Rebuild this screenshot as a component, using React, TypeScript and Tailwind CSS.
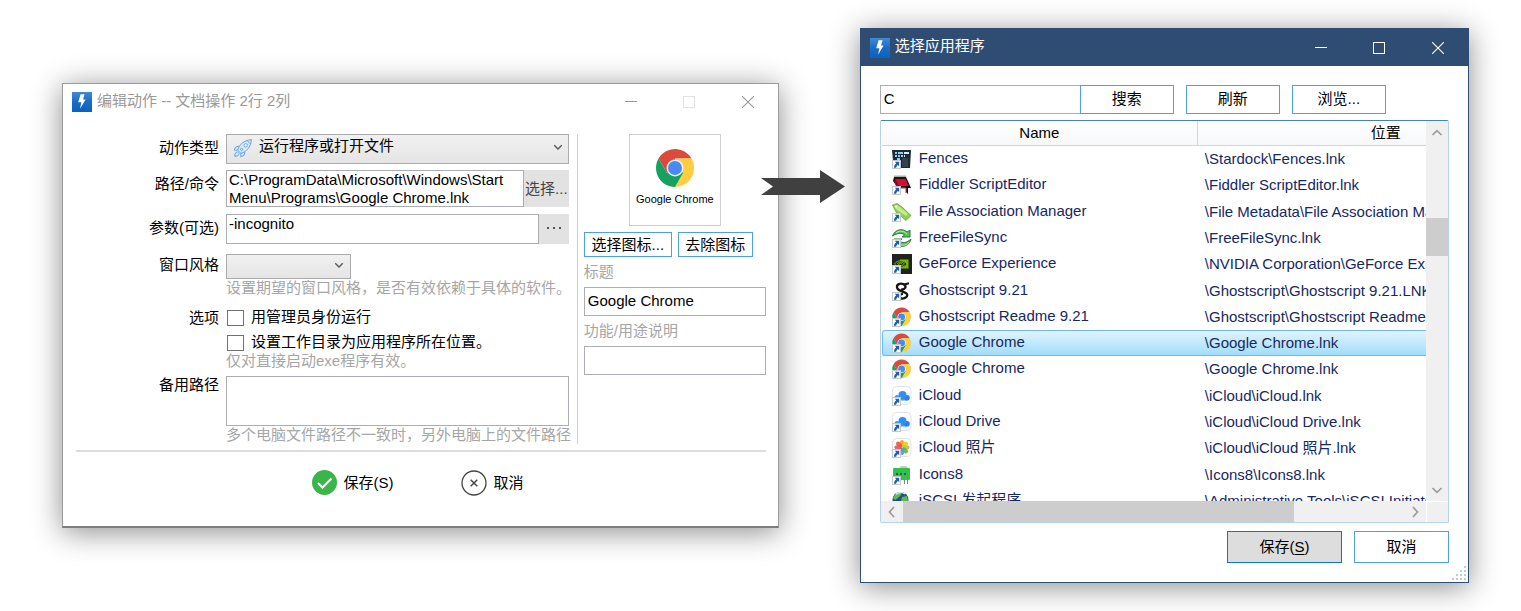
import React from "react";

const FONT = "font-['Liberation_Sans','Noto_Sans_CJK_SC',sans-serif]";

function BoltIcon() {
  return (
    <svg viewBox="0 0 20 20" className="h-5 w-5 shrink-0" aria-hidden="true">
      <defs>
        <linearGradient id="bolt" x1="0" y1="0" x2="0" y2="1">
          <stop offset="0" stopColor="#3f8ad6" />
          <stop offset="0.5" stopColor="#1a6cc4" />
          <stop offset="1" stopColor="#0a62bd" />
        </linearGradient>
      </defs>
      <rect width="20" height="20" fill="url(#bolt)" />
      <path d="M8.600 2.300H12.600L11 7.600H13.600L8 16.800L9.400 10.200H6.200Z" fill="#fff" />
    </svg>
  );
}

function ChromeShapes() {
  return (
    <>
      <path d="M24 24V13H43.05A22 22 0 0 0 4.95 13L14.47 29.5Z" fill="#dc4a3d" />
      <path d="M24 24V13H43.05A22 22 0 0 1 24 46L33.53 29.5Z" fill="#fecd40" />
      <path d="M24 24L33.53 29.5L24 46A22 22 0 0 1 4.95 13L14.47 29.5Z" fill="#16a15f" />
      <circle cx="24" cy="24" r="9.8" fill="#f3f5f8" />
      <circle cx="24" cy="24" r="8.1" fill="#4a89f4" />
    </>
  );
}

function Rocket() {
  return (
    <svg viewBox="0 0 20 20" className="h-5 w-5" fill="#d9eafa" stroke="#5b9bd8" strokeWidth="0.9" strokeLinejoin="round" aria-hidden="true">
      <path d="M6 8L2.500 9.200L1.200 12.200L4.600 12.200M12 14L10.800 17.500L7.800 18.800L7.800 15.400" />
      <path d="M4.600 12C6.500 6.500 10.500 2.400 18.400 1.600C17.800 9.500 13.500 13.500 8 15.400Z" />
      <path d="M14.200 2.600L17.400 5.800" fill="none" />
      <circle cx="12.700" cy="7.300" r="1.700" fill="#fff" />
      <circle cx="8.600" cy="11.400" r="1.100" fill="#fff" />
      <path d="M4.300 13.700L2.200 15.200L1.700 18.300L4.800 17.800L6.300 15.700Z" />
    </svg>
  );
}

function Chevron({ dir, className }: { dir: "up" | "down" | "left" | "right"; className: string }) {
  const paths = {
    up: "M1.500 8L6 3.700L10.500 8",
    down: "M1.500 4L6 8.300L10.500 4",
    left: "M8 1L3.500 6L8 11",
    right: "M4 1L8.500 6L4 11",
  };
  return (
    <svg viewBox="0 0 12 12" className={className} fill="none" stroke="currentColor" strokeWidth="1.7" aria-hidden="true">
      <path d={paths[dir]} />
    </svg>
  );
}

function CaptionButtons({ dimMax }: { dimMax?: boolean }) {
  const btn = "flex h-full w-[58px] items-center justify-center";
  return (
    <div className="ml-auto flex h-full">
      <button aria-label="最小化" className={btn}>
        <svg viewBox="0 0 12 12" className="h-3 w-3"><path d="M0 5.5H12" stroke="currentColor" /></svg>
      </button>
      <button aria-label="最大化" className={btn}>
        <svg viewBox="0 0 12 12" className={dimMax ? "h-3 w-3 text-[#e3e3e3]" : "h-3 w-3"}>
          <rect x="0.5" y="0.5" width="11" height="11" fill="none" stroke="currentColor" />
        </svg>
      </button>
      <button aria-label="关闭" className="flex h-full w-[60px] items-center justify-center">
        <svg viewBox="0 0 12 12" className="h-3 w-3"><path d="M0 0L12 12M12 0L0 12" stroke="currentColor" strokeWidth="1.1" /></svg>
      </button>
    </div>
  );
}

type IconName = "fences" | "fiddler" | "tag" | "sync" | "nvidia" | "ghost" | "chrome" | "cloud" | "photos" | "icons8" | "globe";

const PETALS = ["#f9a31a", "#f4c81e", "#b4cf3a", "#5fb660", "#5b9fd0", "#9a77b8", "#d6607d", "#ee5b3c"];

function Art({ name }: { name: IconName }) {
  switch (name) {
    case "fences":
      return (
        <>
          <path d="M0 1H19L18 19H5V12H1Z" fill="#1c2b33" />
          <path d="M3 3h2v2H3zM6 3h5v2H6zM3 6h2v2H3zM6 6h2v2H6zM9 6h2v2H9zM5 9h3v2H5z" fill="#8fd0f2" />
          <path d="M12 3h5v2h-5zM12 6h1v2h-1z" fill="#d8f0fb" />
          <path d="M10 9h6v9h-6z" fill="#31444e" />
        </>
      );
    case "fiddler":
      return (
        <>
          <path d="M2 2H14L19 13L16 13V19L14 17V13H6V12L1 6Z" fill="#14090b" />
          <path d="M3 4H13.500L17 11H7Z" fill="#d4102f" />
          <path d="M3 4L7 11L5 13L2 7Z" fill="#8f0b20" />
          <path d="M3 0.500v3M5 0.500v3M7 0.500v3M9 0.500v3M11 0.500v3M13 0.500v3" stroke="#333" strokeWidth="0.8" />
          <path d="M9 13h5v5" fill="none" stroke="#b9404f" />
        </>
      );
    case "tag":
      return (
        <>
          <path d="M0.500 3L5 1.500L10 5L19 13.500L14 18.500L4 10Z" fill="#8fcf4a" stroke="#62a82f" strokeWidth="0.8" />
          <path d="M2 4L5 3L9 6L16 12L14 14L4 7Z" fill="#c5ec8f" />
          <circle cx="4" cy="4.500" r="1.100" fill="#fff" />
        </>
      );
    case "sync":
      return (
        <>
          <path d="M0.500 8C3 1 11 0 15 4L18 2V9H10L12.500 7C10 4.500 5 5 0.500 8Z" fill="#5bbb5f" stroke="#267e36" strokeWidth="1" />
          <path d="M19 11C17 18.500 9 20.500 5 16L2 18V11H10L7.500 13C10 15.500 15 15 19 11Z" fill="#5bbb5f" stroke="#267e36" strokeWidth="1" />
          <path d="M4 5C8 2 12 3 15 6M9 17C13 18 16 16 17 14" fill="none" stroke="#baf0b5" />
        </>
      );
    case "nvidia":
      return (
        <>
          <rect width="20" height="20" fill="#20231f" />
          <path d="M8 5.500H16.500V14.500H8Z" fill="#76b900" />
          <path d="M2.500 10C5 6 11 5.500 15 10C11 14.500 6 14 2.500 10Z" fill="#20231f" stroke="#76b900" />
          <path d="M5 10C7 7.500 10.500 7.500 12.500 10C10.500 12.500 7 12 6.500 10C7.500 8.700 9.500 9 10.500 10.500" fill="none" stroke="#76b900" />
        </>
      );
    case "ghost":
      return (
        <path d="M16 2.500L12 3.500C8 1.500 4.500 3.500 5 6.500C5.500 10 11 10 14.500 12.500C17 15 13 18 9.500 17.500C7 17 7 14 10 13M12 3.500C15 5.500 13 8.500 10 8.500" fill="none" stroke="#161616" strokeWidth="2.3" strokeLinecap="round" />
      );
    case "chrome":
      return <g transform="translate(-0.600 -0.300) scale(0.425)"><ChromeShapes /></g>;
    case "cloud":
      return (
        <>
          <rect x="0.5" y="0.5" width="18.500" height="18" rx="4" fill="#fff" stroke="#e2e2e2" />
          <g fill="#3d9df5">
            <circle cx="5" cy="11.500" r="2.500" />
            <rect x="5" y="10" width="10" height="4.500" />
            <circle cx="15" cy="11.700" r="2.800" fill="#2484ec" />
          </g>
          <circle cx="10.500" cy="9" r="4" fill="#2f90f0" />
        </>
      );
    case "photos":
      return (
        <>
          <rect x="0.5" y="0.5" width="18.500" height="18" rx="4" fill="#fff" stroke="#e2e2e2" />
          {PETALS.map((c, i) => (
            <ellipse key={c} cx="10" cy="5.500" rx="2.300" ry="3.600" fill={c} fillOpacity="0.95" transform={`rotate(${i * 45} 10 9.500)`} />
          ))}
        </>
      );
    case "icons8":
      return (
        <>
          <path d="M7 3C8 0 15 0 16 3Z" fill="#c9cdc9" />
          <path d="M2 3H17Q18 3 18 4V14Q18 15 17 15H2Q1 15 1 14V4Q1 3 2 3Z" fill="#35bf4f" />
          <path d="M4 8h2v2H4zM8 8h2v2H8zM12 8h2v2h-2z" fill="#176b2b" />
          <path d="M12.500 15v4M15.500 15v4" stroke="#7c8b80" />
        </>
      );
    case "globe":
      return (
        <>
          <circle cx="8.500" cy="9" r="8" fill="#1f4f8f" />
          <path d="M3 3C6 0 10 1 9 4L6 7L3 9L1 7ZM10 6L15 5L16 10L12 14L9 10Z" fill="#63b84d" />
          <path d="M4 3.500C6 1 11 1 13 3" fill="none" stroke="#c8e9f5" strokeWidth="1.500" />
        </>
      );
  }
}

function AppIcon({ name }: { name: IconName }) {
  return (
    <svg viewBox="0 0 20 20" className="h-5 w-5 shrink-0" aria-hidden="true">
      <Art name={name} />
      <rect x="0.500" y="11.500" width="8" height="8" fill="#fff" stroke="#c4c9cf" strokeWidth="1" />
      <path d="M2.800 12.800H7.200V17.200L5.900 16C4.800 16.700 4.300 17.500 4.200 18.800H2C1.900 16.900 2.700 15.400 4.200 14.300Z" fill="#1f5fa8" />
    </svg>
  );
}

const APPS: { icon: IconName; name: string; path: string; selected?: boolean }[] = [
  { icon: "fences", name: "Fences", path: "\\Stardock\\Fences.lnk" },
  { icon: "fiddler", name: "Fiddler ScriptEditor", path: "\\Fiddler ScriptEditor.lnk" },
  { icon: "tag", name: "File Association Manager", path: "\\File Metadata\\File Association Manager.lnk" },
  { icon: "sync", name: "FreeFileSync", path: "\\FreeFileSync.lnk" },
  { icon: "nvidia", name: "GeForce Experience", path: "\\NVIDIA Corporation\\GeForce Experience.lnk" },
  { icon: "ghost", name: "Ghostscript 9.21", path: "\\Ghostscript\\Ghostscript 9.21.LNK" },
  { icon: "chrome", name: "Ghostscript Readme 9.21", path: "\\Ghostscript\\Ghostscript Readme 9.21.LNK" },
  { icon: "chrome", name: "Google Chrome", path: "\\Google Chrome.lnk", selected: true },
  { icon: "chrome", name: "Google Chrome", path: "\\Google Chrome.lnk" },
  { icon: "cloud", name: "iCloud", path: "\\iCloud\\iCloud.lnk" },
  { icon: "cloud", name: "iCloud Drive", path: "\\iCloud\\iCloud Drive.lnk" },
  { icon: "photos", name: "iCloud 照片", path: "\\iCloud\\iCloud 照片.lnk" },
  { icon: "icons8", name: "Icons8", path: "\\Icons8\\Icons8.lnk" },
  { icon: "globe", name: "iSCSI 发起程序", path: "\\Administrative Tools\\iSCSI Initiator.lnk" },
];

const field = "block border border-[#abadb3] bg-white text-black outline-none";
const blueButton = "border border-[#4f9fe3] bg-white text-black";
const hint = "h-[18px] whitespace-nowrap leading-[18px] text-[#a6a6a6]";
const grid = "grid grid-cols-[156px_minmax(0,1fr)] gap-x-[7px]";
const label = "text-right leading-[18px] text-black";

function EditActionWindow() {
  return (
    <section className="min-w-0 flex-[717] border border-b-2 border-[#9b9b9b] border-b-[#7d7d7d] bg-white shadow-[0_4px_28px_rgba(0,0,0,0.45)]">
      <header className="flex h-9 items-center pl-[9px] text-[#999]">
        <BoltIcon />
        <h1 className="ml-[5px] whitespace-nowrap pb-[2px]">编辑动作 -- 文档操作 2行 2列</h1>
        <CaptionButtons dimMax />
      </header>
      <div className="flex pr-3 pt-[14px]">
        <div className="mr-2 min-w-0 flex-1">
          <div className={grid}>
            <label htmlFor="type" className={`${label} pt-[5px]`}>动作类型</label>
            <div className="relative">
              <select id="type" className="block h-[30px] w-full appearance-none border border-[#acacac] bg-gradient-to-b from-[#f0f0f0] to-[#e5e5e5] pb-[6px] pl-8 text-black">
                <option>运行程序或打开文件</option>
              </select>
              <span className="pointer-events-none absolute left-[7px] top-[4px]"><Rocket /></span>
              <Chevron dir="down" className="pointer-events-none absolute right-[6px] top-[8px] h-[10px] w-[10px] text-[#555]" />
            </div>
          </div>
          <div className={`${grid} mt-[6px]`}>
            <label htmlFor="path" className={`${label} pt-[5px]`}>路径/命令</label>
            <div className="flex h-[37px]">
              <textarea id="path" className={`${field} min-w-0 flex-1 resize-none overflow-hidden px-[2px] leading-[18px]`} defaultValue={"C:\\ProgramData\\Microsoft\\Windows\\Start Menu\\Programs\\Google Chrome.lnk"} />
              <button className="w-[45px] whitespace-nowrap bg-[#e2e2e2] text-[#444]">选择...</button>
            </div>
          </div>
          <div className={`${grid} mt-[7px]`}>
            <label htmlFor="args" className={`${label} pt-[5px]`}>参数(可选)</label>
            <div className="flex h-[30px]">
              <textarea id="args" className={`${field} min-w-0 flex-1 resize-none overflow-hidden px-[2px] leading-[18px]`} defaultValue="-incognito" />
              <button aria-label="更多" className="flex w-[30px] items-center justify-center gap-1 bg-[#e2e2e2] pb-[2px]">
                <i className="h-[2px] w-[2px] bg-[#555]" />
                <i className="h-[2px] w-[2px] bg-[#555]" />
                <i className="h-[2px] w-[2px] bg-[#555]" />
              </button>
            </div>
          </div>
          <div className={`${grid} mt-[10px]`}>
            <label htmlFor="style" className={`${label} pt-[2px]`}>窗口风格</label>
            <div>
              <div className="relative w-[125px]">
                <select id="style" className="block h-[25px] w-full appearance-none border border-[#acacac] bg-gradient-to-b from-[#f0f0f0] to-[#e5e5e5]">
                  <option></option>
                </select>
                <Chevron dir="down" className="pointer-events-none absolute right-[7px] top-[6px] h-[10px] w-[10px] text-[#555]" />
              </div>
              <p className={hint}>设置期望的窗口风格，是否有效依赖于具体的软件。</p>
            </div>
          </div>
          <div className={`${grid} mt-3`}>
            <span className={label}>选项</span>
            <div>
              {["用管理员身份运行", "设置工作目录为应用程序所在位置。"].map((text) => (
                <label key={text} className="mb-[7px] flex h-[18px] items-center whitespace-nowrap text-black last-of-type:mb-0">
                  <input type="checkbox" className="ml-px mr-[7px] h-4 w-[17px] appearance-none border border-[#707070] bg-white" />
                  <span className="pb-[2px]">{text}</span>
                </label>
              ))}
              <p className={hint}>仅对直接启动exe程序有效。</p>
            </div>
          </div>
          <div className={`${grid} mt-[6px]`}>
            <label htmlFor="alt" className={label}>备用路径</label>
            <div>
              <textarea id="alt" className={`${field} h-[50px] w-full resize-none`} />
              <p className={hint}>多个电脑文件路径不一致时，另外电脑上的文件路径</p>
            </div>
          </div>
        </div>
        <aside className="flex w-[189px] shrink-0 flex-col gap-[6px] border-l border-[#cfcfcf] pl-[6px]">
          <div className="flex h-[92px] w-[92px] flex-col items-center gap-[5px] self-center border border-[#cfcfcf] pt-[14px]">
            <svg viewBox="2 2 44 44" className="h-[38px] w-[38px]" aria-hidden="true"><ChromeShapes /></svg>
            <span className="whitespace-nowrap text-[11px] leading-[14px] text-black">Google Chrome</span>
          </div>
          <div className="flex h-[25px] gap-[6px] leading-[20px]">
            <button className={`${blueButton} w-[88px]`}>选择图标...</button>
            <button className={`${blueButton} w-[75px]`}>去除图标</button>
          </div>
          <label htmlFor="title" className="leading-[18px] text-[#a6a6a6]">标题</label>
          <input id="title" defaultValue="Google Chrome" className={`${field} h-[29px] w-full pb-[2px] pl-[3px]`} />
          <label htmlFor="desc" className="leading-[18px] text-[#a6a6a6]">功能/用途说明</label>
          <input id="desc" className={`${field} h-[29px] w-full pl-[3px]`} />
        </aside>
      </div>
      <footer className="ml-[13px] mr-3 mt-[6px] flex justify-center gap-[68px] border-t-2 border-[#dcdcdc] pb-[31px] pr-[6px] pt-[18px] text-black">
        <button className="flex h-[25px] items-center gap-[6px]">
          <svg viewBox="0 0 25 25" className="h-[25px] w-[25px]" aria-hidden="true">
            <circle cx="12.500" cy="12.500" r="12.500" fill="#39b54a" />
            <path d="M6 13L10.500 17.500L19.500 8.500" fill="none" stroke="#fff" strokeWidth="2" />
          </svg>
          保存(S)
        </button>
        <button className="flex h-[25px] items-center gap-[6px]">
          <svg viewBox="0 0 26 26" className="h-[26px] w-[26px]" fill="none" stroke="#444" aria-hidden="true">
            <circle cx="13" cy="13" r="12" strokeWidth="1.300" />
            <path d="M9.700 9.700L16.300 16.300M16.300 9.700L9.700 16.300" strokeWidth="1.500" />
          </svg>
          取消
        </button>
      </footer>
    </section>
  );
}

function AppList() {
  return (
    <div className="mt-[6px] grid h-[403px] grid-cols-[minmax(0,1fr)_22px] grid-rows-[minmax(0,1fr)_21px] rounded-[2px] border border-[#b5d3e7] border-t-[#4682b4]">
      <div className="overflow-hidden pl-px">
        <table className="h-[393px] w-[692px] table-fixed border-separate border-spacing-0">
          <thead>
            <tr className="h-[25px]">
              <th className="w-[316px] border-b border-r border-[#d5d5d5] bg-gradient-to-b from-white to-[#f7f8fa] p-0 font-normal text-black">Name</th>
              <th className="border-b border-[#d5d5d5] bg-gradient-to-b from-white to-[#f7f8fa] p-0 font-normal text-black">位置</th>
            </tr>
          </thead>
          <tbody className="text-[#17285f]">
            {APPS.map((app, i) => (
              <tr
                key={i}
                className={app.selected ? "rounded-[3px] bg-gradient-to-b from-[#e3f5fd] to-[#9ddcfb] outline outline-1 -outline-offset-1 outline-[#74b8ee]" : ""}
              >
                <td className="whitespace-nowrap p-0 pl-[10px]">
                  <div className="flex h-5 items-center gap-[7px]">
                    <AppIcon name={app.icon} />
                    <span className="pb-[2px]">{app.name}</span>
                  </div>
                </td>
                <td className="whitespace-nowrap p-0 pl-[7px]">
                  <div className="h-5 leading-5">{app.path}</div>
                </td>
              </tr>
            ))}
          </tbody>
        </table>
      </div>
      <div className="flex flex-col items-center bg-[#f0f0f0] pb-[5px] pt-[6px] text-[#9c9c9c]">
        <Chevron dir="up" className="h-3 w-3" />
        <div className="mt-[79px] h-[38px] w-full bg-[#cdcdcd]" />
        <Chevron dir="down" className="mt-auto h-3 w-3" />
      </div>
      <div className="flex items-center bg-[#f0f0f0] px-[5px] text-[#9c9c9c]">
        <Chevron dir="left" className="h-3 w-3" />
        <div className="ml-[5px] h-full w-[73%] bg-[#cdcdcd]" />
        <Chevron dir="right" className="ml-auto h-3 w-3" />
      </div>
      <div className="border-l border-t border-white bg-[#f0f0f0]" />
    </div>
  );
}

function PickAppWindow() {
  return (
    <section className="relative min-w-0 flex-[609] border border-[#2f4e75] bg-white pb-[19px] shadow-[0_4px_28px_rgba(0,0,0,0.45)]">
      <header className="flex h-[37px] items-center bg-[#2f4d72] pl-[9px] text-white">
        <BoltIcon />
        <h1 className="ml-[5px] whitespace-nowrap pb-[3px]">选择应用程序</h1>
        <CaptionButtons />
      </header>
      <div className="px-[19px] pt-[19px]">
        <div className="flex h-[29px]">
          <input aria-label="搜索应用" defaultValue="C" className={`${field} w-[200px] border-r-0 pb-[2px] pl-[3px]`} />
          <button className={`${blueButton} w-[94px] pb-[2px]`}>搜索</button>
          <button className={`${blueButton} ml-3 w-[94px] pb-[2px]`}>刷新</button>
          <button className={`${blueButton} ml-3 w-[94px] pb-[2px]`}>浏览...</button>
        </div>
        <AppList />
        <div className="mt-2 flex h-8 justify-end gap-3">
          <button className="w-[115px] border border-[#0f75c9] bg-[#dddddd] text-black">保存(<span className="underline underline-offset-2">S</span>)</button>
          <button className={`${blueButton} w-[95px]`}>取消</button>
        </div>
      </div>
      <svg viewBox="0 0 14 14" className="absolute bottom-[2px] right-[2px] h-[14px] w-[14px]" fill="#c3cad9" aria-hidden="true">
        <path d="M12 0h2v2h-2zM12 4h2v2h-2zM12 8h2v2h-2zM12 12h2v2h-2zM8 4h2v2H8zM8 8h2v2H8zM8 12h2v2H8zM4 8h2v2H4zM4 12h2v2H4zM0 12h2v2H0z" />
      </svg>
    </section>
  );
}

export default function App() {
  return (
    <main className={`flex min-h-screen items-center overflow-hidden bg-white pl-[62px] pr-[52px] text-[15px] leading-[20px] ${FONT}`}>
      <EditActionWindow />
      <div className="relative z-10 w-[81px] shrink-0 self-start pt-[170px]">
        <svg viewBox="0 0 84 33" className="-ml-[18px] h-[33px] w-[84px] max-w-none" aria-hidden="true">
          <path d="M0 8H59V0L84 16.500L59 33V25H0L12 16.500Z" fill="#404040" />
        </svg>
      </div>
      <PickAppWindow />
    </main>
  );
}
